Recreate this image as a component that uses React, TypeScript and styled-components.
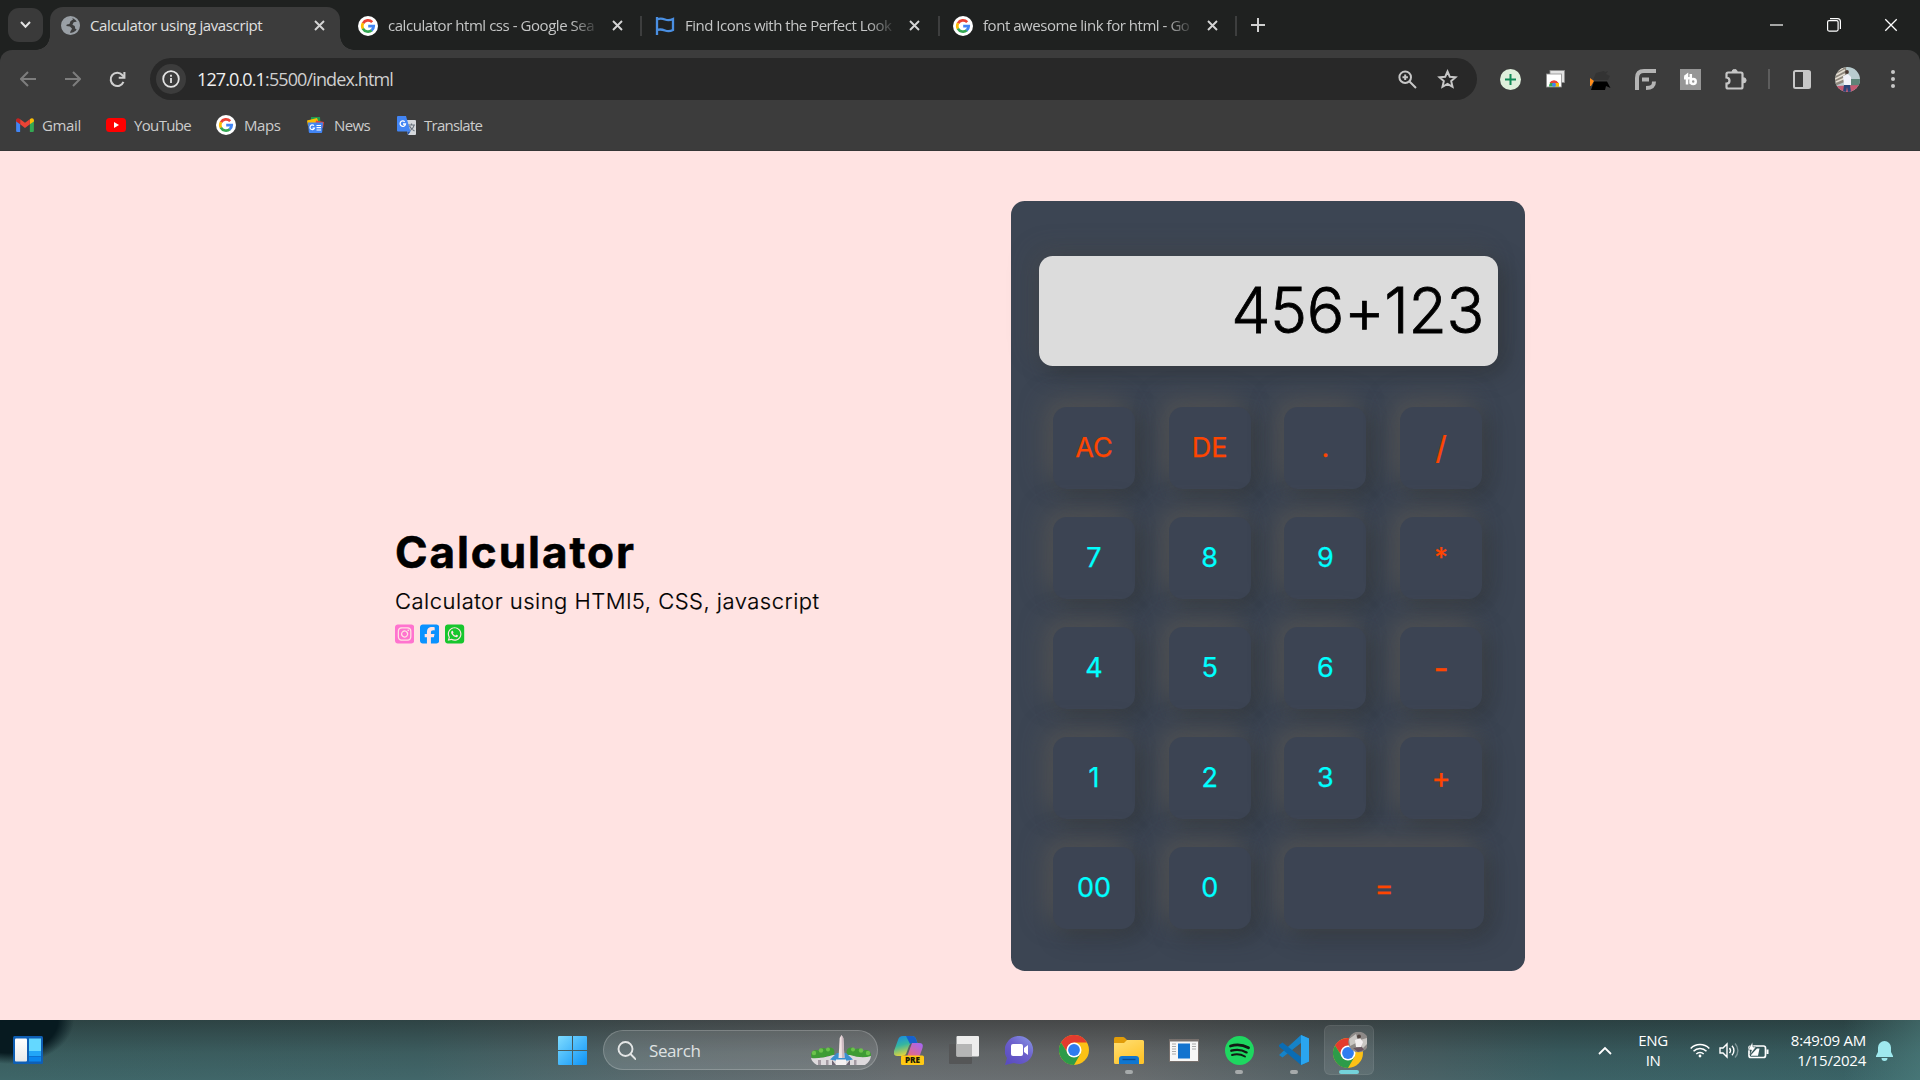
import React from 'react';
import styled, { createGlobalStyle } from 'styled-components';
import { FaSquareInstagram, FaSquareFacebook, FaSquareWhatsapp } from 'react-icons/fa6';

const Global = createGlobalStyle`
  * { box-sizing: border-box; }
  html, body { margin: 0; padding: 0; overflow: hidden; }
  svg { display: block; flex: none; }
`;

const ui = `'Segoe UI', 'Open Sans', 'Noto Sans', sans-serif`;
const page = `Inter, 'Open Sans', sans-serif`;

const Screen = styled.div`
  width: 1920px;
  height: 1080px;
  display: flex;
  flex-direction: column;
  font-family: ${ui};
  overflow: hidden;
`;

/* ---------- tab strip ---------- */
const TabStrip = styled.div`
  height: 50px;
  flex: none;
  display: flex;
  align-items: center;
  background: #1f2120;
  padding-left: 8px;
`;
const TabSearch = styled.div`
  width: 35px;
  height: 34px;
  border-radius: 11px;
  background: #3a3a3a;
  display: grid;
  place-items: center;
  margin-right: 7px;
`;
const ActiveTab = styled.div`
  position: relative;
  width: 290px;
  height: 43px;
  align-self: flex-end;
  background: #3c3c3c;
  border-radius: 13px 13px 0 0;
  display: flex;
  align-items: center;
  padding: 0 12px 6px 11px;
  &::before, &::after {
    content: '';
    position: absolute;
    bottom: 0;
    width: 14px;
    height: 14px;
  }
  &::before { left: -14px; background: radial-gradient(circle at 0 0, transparent 13.5px, #3c3c3c 14px); }
  &::after { right: -14px; background: radial-gradient(circle at 100% 0, transparent 13.5px, #3c3c3c 14px); }
`;
const Tab = styled.div<{ $w: number; $pad: number }>`
  width: ${p => p.$w}px;
  height: 20px;
  margin-top: 1px;
  border-right: 2px solid #3d3e3e;
  display: flex;
  align-items: center;
  padding-left: ${p => p.$pad}px;
`;
const TabTitle = styled.div<{ $fade?: boolean; $ls: number }>`
  width: 209px;
  margin: -1px 0 0 10px;
  font-size: 15px;
  line-height: 22px;
  letter-spacing: ${p => p.$ls}px;
  color: ${p => (p.$fade ? '#c5c6c6' : '#e0e0e0')};
  white-space: nowrap;
  ${p => p.$fade && `
    -webkit-mask-image: linear-gradient(90deg, #000 183px, transparent 212px);
    mask-image: linear-gradient(90deg, #000 183px, transparent 212px);
  `}
`;
const TabClose = styled.div<{ $ml: number }>`
  margin-left: ${p => p.$ml}px;
`;
const NewTab = styled.div`
  margin-left: 14px;
`;
const WindowButtons = styled.div`
  margin-left: auto;
  margin-right: 1px;
  height: 100%;
  display: grid;
  grid-template-columns: repeat(3, 57px);
  place-items: center;
`;

/* ---------- toolbar ---------- */
const ToolbarBack = styled.div`
  background: #1f2120;
  flex: none;
`;
const Toolbar = styled.div`
  height: 58px;
  background: #3c3c3c;
  border-radius: 12px 12px 0 0;
  display: flex;
  align-items: center;
  padding-left: 5px;
`;
const Slot = styled.div<{ $w?: number }>`
  width: ${p => p.$w ?? 45}px;
  height: 42px;
  display: grid;
  place-items: center;
`;
const Omnibox = styled.div`
  width: 1327px;
  height: 42px;
  margin: 0 11px 0 10px;
  border-radius: 21px;
  background: #282828;
  display: flex;
  align-items: center;
  padding: 0 10px 0 6px;
`;
const InfoBadge = styled.div`
  width: 30px;
  height: 30px;
  border-radius: 50%;
  background: #3c3c3c;
  display: grid;
  place-items: center;
`;
const Url = styled.div`
  flex: 1;
  margin-left: 11px;
  font-size: 18px;
  line-height: 24px;
  letter-spacing: -0.88px;
  color: #cfcfcf;
  span { color: #f0f0f0; }
`;
const OmniIcon = styled.div`
  width: 40px;
  display: grid;
  place-items: center;
`;
const Avatar = styled.div`
  border-radius: 50%;
  overflow: hidden;
`;

/* ---------- bookmarks ---------- */
const Bookmarks = styled.div`
  height: 43px;
  flex: none;
  background: #3c3c3c;
  border-bottom: 1px solid #353535;
  display: grid;
  grid-template-columns: 90px 110px 90px 91px 120px;
  padding-left: 16px;
`;
const Bookmark = styled.div<{ $gap: number; $ls: number }>`
  display: flex;
  align-items: center;
  height: 35px;
  gap: ${p => p.$gap}px;
  font-size: 15px;
  line-height: 20px;
  padding-bottom: 1px;
  color: #cccccc;
  letter-spacing: ${p => p.$ls}px;
`;

/* ---------- page ---------- */
const Page = styled.main`
  height: 869px;
  flex: none;
  background: #ffe3e2;
  display: flex;
  align-items: flex-start;
  padding: 50px 0 0 395px;
  font-family: ${page};
`;
const Intro = styled.section`
  width: 616px;
  padding-top: 321px;
`;
const Title = styled.h1`
  margin: 0;
  font-size: 44px;
  line-height: 60px;
  font-weight: 700;
  color: #000;
  letter-spacing: 1.95px;
  -webkit-text-stroke: 0.6px #000;
`;
const Subtitle = styled.p`
  margin: 2px 0 0;
  font-size: 22px;
  line-height: 34px;
  font-weight: 300;
  color: #000;
  letter-spacing: 0.5px;
  -webkit-text-stroke: 0.2px #000;
  white-space: nowrap;
`;
const Social = styled.div`
  display: flex;
  gap: 6px;
  margin-top: 5px;
  svg { width: 19.2px; height: 22px; }
`;
const Calculator = styled.section`
  width: 514px;
  height: 770px;
  border-radius: 13.75px;
  background: #3c4553;
  padding: 55px 27px 0 28px;
`;
const Display = styled.div`
  height: 110px;
  border-radius: 13.75px;
  background: #dcdcdc;
  padding: 0 14px 2px 0;
  display: flex;
  align-items: center;
  justify-content: flex-end;
  font-size: 62.5px;
  font-weight: 300;
  letter-spacing: -0.4px;
  color: #000;
  -webkit-text-stroke: 0.8px #000;
  box-shadow: -7px -7px 24px rgba(84, 78, 74, 0.3), 7px 7px 21px rgba(42, 46, 50, 0.55);
`;
const Keys = styled.div`
  display: grid;
  grid-template-columns: repeat(4, 82px);
  grid-auto-rows: 82px;
  column-gap: 33.7px;
  row-gap: 28px;
  margin: 41px 0 0 14px;
`;
const Key = styled.button<{ $op?: boolean; $wide?: boolean; $size?: number }>`
  grid-column: span ${p => (p.$wide ? 2 : 1)};
  width: ${p => (p.$wide ? '199.5px' : '82px')};
  border: 0;
  padding: 0;
  border-radius: 13.75px;
  background: #3c4453;
  color: ${p => (p.$op ? '#ff4500' : '#00ffff')};
  font: 400 ${p => p.$size ?? 27}px/82px ${page};
  -webkit-text-stroke: 0.25px currentColor;
  box-shadow: -8px -8px 24px rgba(94, 90, 86, 0.62), 7px 7px 22px rgba(42, 46, 50, 0.55);
`;

/* ---------- taskbar ---------- */
const Taskbar = styled.footer`
  height: 60px;
  flex: none;
  display: flex;
  align-items: center;
  background:
    radial-gradient(ellipse 64px 44px at 10px 0, #071a20 75%, rgba(7, 26, 32, 0) 100%),
    linear-gradient(90deg, rgba(0,0,0,0) 96%, rgba(86,140,138,.45) 100%),
    linear-gradient(180deg, rgba(20, 18, 16, 0.42), rgba(20, 18, 16, 0.12) 55%, rgba(0, 0, 0, 0)),
    linear-gradient(90deg, #3e6668 0, #42676a 420px, #5d6c70 680px, #6a7073 900px, #6a6e70 1120px, #566468 1320px, #3c6266 1560px, #3a6467 1920px);
`;
const Widgets = styled.div`
  width: 547px;
  flex: none;
  padding-left: 13px;
`;
const TaskItem = styled.div<{ $active?: boolean }>`
  position: relative;
  width: 50px;
  height: 50px;
  margin-right: 5px;
  border-radius: 6px;
  display: grid;
  place-items: center;
  flex: none;
  background: ${p => (p.$active ? 'rgba(255,255,255,.09)' : 'transparent')};
  box-shadow: ${p => (p.$active ? 'inset 0 0 0 1px rgba(255,255,255,.07)' : 'none')};
`;
const Running = styled.i<{ $active?: boolean }>`
  position: absolute;
  left: 50%;
  bottom: 1px;
  width: ${p => (p.$active ? 20 : 8)}px;
  height: 4px;
  border-radius: 2px;
  transform: translateX(-50%);
  background: ${p => (p.$active ? '#74d3da' : '#a6aaab')};
`;
const SearchBox = styled.div`
  width: 275px;
  height: 40px;
  flex: none;
  margin-left: 1px;
  margin-right: 6px;
  border-radius: 20px;
  border: 1px solid rgba(255, 255, 255, 0.2);
  background: rgba(255, 255, 255, 0.12);
  display: flex;
  align-items: center;
  padding: 0 5px 0 13px;
  overflow: hidden;
  color: #dfe2e2;
  font-size: 17px;
  letter-spacing: -0.4px;
  span { flex: 1; margin: 0 0 0 13px; }
`;
const Tray = styled.div`
  margin-left: auto;
  display: flex;
  align-items: center;
  height: 60px;
  color: #fff;
  font-size: 15px;
  line-height: 20px;
`;
const Lang = styled.div`
  width: 50px;
  margin: 0 12px 0 16px;
  text-align: center;
  letter-spacing: -0.4px;
`;
const TrayIcons = styled.div`
  display: flex;
  align-items: center;
  gap: 9px;
  width: 81px;
`;
const Clock = styled.div`
  width: 95px;
  text-align: right;
  letter-spacing: -0.25px;
  white-space: nowrap;
`;
const Bell = styled.div`
  margin: 2px 27px 0 10px;
`;

/* ---------- drawings ---------- */
const CloseX = ({ size = 11, color = '#d5d5d5', w = 1.9 }: { size?: number; color?: string; w?: number }) => (
  <svg width={size} height={size} viewBox="0 0 11 11"><path d="M1 1l9 9M10 1l-9 9" stroke={color} strokeWidth={w} fill="none" /></svg>
);
const GoogleG = ({ size = 20 }: { size?: number }) => (
  <svg width={size} height={size} viewBox="0 0 20 20">
    <circle cx="10" cy="10" r="10" fill="#fff" />
    <g fill="none" strokeWidth="2.7">
      <path d="M14.2 6.2A5.7 5.7 0 0 0 5 7.3" stroke="#ea4335" />
      <path d="M5 7.2a5.8 5.8 0 0 0 0 5.6" stroke="#fbbc05" />
      <path d="M4.9 12.6a5.8 5.8 0 0 0 8.900 1.600" stroke="#34a853" />
      <path d="M13.600 14.400A5.700 5.700 0 0 0 15.700 10.100H10.200" stroke="#4285f4" />
    </g>
  </svg>
);
const Globe = () => (
  <svg width="19" height="19" viewBox="0 0 18 18">
    <circle cx="9" cy="9" r="8" fill="#3c3c3c" stroke="#9aa0a6" strokeWidth="2" />
    <path d="M2 6.500C3 3 6 1.500 10 1.500L11.500 3 9 5 8 7.500 5.500 8 5 9.500 8.500 10l2 2L9 14.500 8.500 17A8 8 0 0 1 1 9z" fill="#9aa0a6" />
    <path d="M12 6l4.500-1A8 8 0 0 1 16 13l-2.500-1-.5-2.500-2.200-1.300z" fill="#9aa0a6" />
  </svg>
);
const FlagIcon = () => (
  <svg width="20" height="20" viewBox="0 0 20 20" fill="none" stroke="#4a8fe2" strokeWidth="2.300">
    <path d="M2 1v18M2 3.500c3-1.500 5.500-1 8 0s5 1 8-.5v11c-3 1.500-5.500 1.500-8 .5s-5-1.500-8-.5" />
  </svg>
);
const Arrow = ({ flip }: { flip?: boolean }) => (
  <svg width="16" height="16" viewBox="0 0 16 16" fill="none" stroke="#7d7d7d" strokeWidth="2">
    {flip ? <path d="M0 8h14.500M8 1l7 7-7 7" /> : <path d="M16 8H1.500M8 1L1 8l7 7" />}
  </svg>
);
const Reload = () => (
  <svg width="17" height="17" viewBox="0 0 18 18" fill="none" stroke="#cfcfcf" strokeWidth="2.200">
    <path d="M15.300 11.500A7 7 0 1 1 14 4.200L16 6.300" /><path d="M16.300 1v6.200h-6" />
  </svg>
);
const Info = () => (
  <svg width="18" height="18" viewBox="0 0 18 18"><circle cx="9" cy="9" r="7.800" fill="none" stroke="#e3e3e3" strokeWidth="1.800" /><path d="M9 8v5M9 4.700v2" stroke="#e3e3e3" strokeWidth="1.800" /></svg>
);
const ZoomIcon = () => (
  <svg width="19" height="19" viewBox="0 0 19 19" fill="none" stroke="#c7c7c7" strokeWidth="2"><circle cx="7.200" cy="7.200" r="5.800" /><path d="M11.500 11.500l6.500 6.500M7.200 4.500v5.400M4.500 7.200h5.400" /></svg>
);
const Star = () => (
  <svg width="21" height="20" viewBox="0 0 21 20" fill="none" stroke="#c7c7c7" strokeWidth="2"><path d="M10.500 2.500l2.300 5.300 5.700.5-4.300 3.800 1.300 5.700-5-3-5 3 1.300-5.700L2.500 8.300l5.700-.5z" /></svg>
);
const PlusBadge = () => (
  <svg width="21" height="21" viewBox="0 0 21 21"><circle cx="10.500" cy="10.500" r="10.500" fill="#dff0dc" /><path d="M10.500 5v11M5 10.500h11" stroke="#118a56" strokeWidth="2" /></svg>
);
const CardsIcon = () => (
  <svg width="19" height="18" viewBox="0 0 19 18">
    <rect x="4" y=".5" width="14.500" height="12" fill="#e2e2e2" stroke="#8d8d8d" strokeWidth=".8" />
    <rect x=".5" y="4" width="15" height="13" fill="#fff" stroke="#8d8d8d" strokeWidth=".8" />
    <path d="M3 16.500a5 5.500 0 0 1 10 0z" fill="#34a853" /><path d="M3.500 13a5 5 0 0 1 9 0H8z" fill="#ea4335" /><path d="M9 13h4v3.500H9z" fill="#fbbc05" /><circle cx="8" cy="14.700" r="2" fill="#4285f4" />
  </svg>
);
const DarkIcon = () => (
  <svg width="21" height="21" viewBox="0 0 21 21"><path d="M6 4l8-2 1 1 3-1-2 3 4 2-2 4H3z" fill="#333" /><path d="M0 9l4 3-3 5H0z" fill="#ff8c1a" /><path d="M4 12.500h13L20.500 19 16 17l-1 4H1z" fill="#000" /></svg>
);
const FIcon = () => (
  <svg width="21" height="21" viewBox="0 0 21 21" fill="none" stroke="#b4b4b4" strokeWidth="4"><path d="M2 21V9q0-7 7-7h12M7 10.500h7" /><path d="M19 12.500c0 5-2 6.500-8 6.500" /></svg>
);
const TbIcon = () => (
  <svg width="21" height="21" viewBox="0 0 21 21"><rect width="21" height="21" fill="#969696" /><g fill="none" stroke="#fff" strokeWidth="2.500"><path d="M4.500 8L7 6v9.500M4 9.300h6.500M10.800 5v10" /><circle cx="13.200" cy="12.500" r="2.500" /></g></svg>
);
const Puzzle = () => (
  <svg width="22" height="21" viewBox="0 0 22 21"><path d="M3 3.500h13a1.500 1.500 0 0 1 1.500 1.500v13a1.500 1.500 0 0 1-1.500 1.500H3A1.500 1.500 0 0 1 1.500 18v-3.500c4 0 4-5.500 0-6V5A1.500 1.500 0 0 1 3 3.500z" fill="none" stroke="#c7c7c7" strokeWidth="2.200" /><path d="M7 3a2.600 2.600 0 0 1 5.200 0zM18.500 8.700a2.600 2.600 0 0 1 0 5.200z" fill="#c7c7c7" stroke="#c7c7c7" /></svg>
);
const SidePanel = () => (
  <svg width="18" height="19" viewBox="0 0 18 19"><rect x="1" y="1" width="16" height="17" rx="1.500" fill="none" stroke="#c7c7c7" strokeWidth="2" /><path d="M10 1h7v17h-7z" fill="#c7c7c7" /></svg>
);
const Photo = ({ size }: { size: number }) => (
  <svg width={size} height={size} viewBox="0 0 25 25">
    <rect width="25" height="25" fill="#b9cccf" /><path d="M0 0h11l1 14-12 5z" fill="#8d867c" /><path d="M1 8l9-5M0 12l10-5M1 15l9-4M2 4l6-3" stroke="#e4ddd2" strokeWidth="1.500" /><path d="M14 12h11v8H14z" fill="#5e8478" />
    <path d="M0 19l25-1v7H0z" fill="#c45a72" /><path d="M8 9l5-2 3 3v8H9z" fill="#f2f2fa" /><circle cx="12" cy="5" r="1.900" fill="#4a3731" /><path d="M9 18h6l1 7h-3l-1-5-1 5H8z" fill="#2b4478" />
  </svg>
);
const Dots = () => (<svg width="4" height="20" viewBox="0 0 4 20" fill="#c7c7c7"><circle cx="2" cy="3" r="2" /><circle cx="2" cy="10" r="2" /><circle cx="2" cy="17" r="2" /></svg>);
const Gmail = () => (
  <svg width="18" height="14" viewBox="0 0 19 15"><path d="M0 2h4.300v13H1.200Q0 15 0 13.800z" fill="#4285f4" /><path d="M14.700 2H19v11.800q0 1.200-1.200 1.200h-3.100z" fill="#34a853" /><path d="M14.700 6.700V1.300C16.500-.5 19 0 19 2.500v1.200z" fill="#fbbc04" /><path d="M4.300 6.700V1.300L9.500 5.200l5.200-3.900v5.400L9.500 10.600z" fill="#ea4335" /><path d="M0 3.700V2.500C0 0 2.500-.5 4.300 1.300v5.400z" fill="#c5221f" /></svg>
);
const YouTube = () => (<svg width="20" height="14" viewBox="0 0 20 14"><rect width="20" height="14" rx="3.500" fill="#f00" /><path d="M8 4l5 3-5 3z" fill="#fff" /></svg>);
const News = () => (
  <svg width="19" height="16" viewBox="0 0 19 16"><path d="M5 0l9-.2.500 7H5z" fill="#1e9b50" /><path d="M1 3.500l10-2.500 2 5-11 3z" fill="#fbbc04" /><path d="M10 3.500l8 1.500-1 6-8-2z" fill="#ea4335" /><path d="M2 5.500h15l-.8 9.500q-.1 1-1 1H3.800q-.900 0-1-1z" fill="#4285f4" /><g fill="none" stroke="#fff" strokeWidth="1.200"><path d="M8 8.700a2.300 2.300 0 1 0 .5 2.300H6.500M10.500 8.500h4.500M10.500 10.700h4.500M10.500 13h4.500" /></g></svg>
);
const Translate = () => (
  <svg width="19" height="19" viewBox="0 0 19 19"><path d="M7 4h11a1 1 0 0 1 1 1v13a1 1 0 0 1-1 1h-7z" fill="#d5d8dc" /><path d="M11 9h7M14.500 7.500V9M17 9c-.5 3-3 5-5 6M12.500 10c1 2 3 4 5 5" stroke="#6b747e" strokeWidth="1.200" fill="none" /><path d="M1 0h8l4.500 15.500H1a1 1 0 0 1-1-1V1a1 1 0 0 1 1-1z" fill="#4285f4" /><path d="M7.700 5.700a2.700 2.700 0 1 0 .8 2.300H6" stroke="#fff" strokeWidth="1.300" fill="none" /><path d="M10 15.500h3.500L11 19z" fill="#2454ad" /></svg>
);
const ChromeDisc = () => (
  <>
    <circle cx="15" cy="15" r="15" fill="#fbc116" />
    <path d="M2 7.500A15 15 0 0 1 28 7.500H15L9 18.500z" fill="#e33b2e" />
    <path d="M2 7.500A15 15 0 0 0 15 30l6.500-11.200L9 18.500z" fill="#2d9b49" />
    <circle cx="15" cy="15" r="7.500" fill="#fff" /><circle cx="15" cy="15" r="5.900" fill="#2f7cf0" />
  </>
);
const Chrome = () => (<svg width="30" height="30" viewBox="0 0 30 30"><ChromeDisc /></svg>);
const WidgetIcon = () => (
  <svg width="30" height="28" viewBox="0 0 30 28"><defs><linearGradient id="wp" x2="0" y2="1"><stop stopColor="#fff" /><stop offset="1" stopColor="#e9e9e9" /></linearGradient></defs><rect width="30" height="28" rx="1.500" fill="#0f5fb4" /><rect x="2" y="2.500" width="12" height="23" rx="1" fill="url(#wp)" /><path d="M16 2.500h12V15H16z" fill="#64d8ff" /><path d="M16 15h12v5H16z" fill="#22a6f7" /><path d="M16 20.500h12v5H16z" fill="#0b86ec" /></svg>
);
const WinLogo = () => (
  <svg width="29" height="29" viewBox="0 0 29 29"><defs><linearGradient id="wl" gradientUnits="userSpaceOnUse" x1="0" y1="0" x2="29" y2="29"><stop stopColor="#7fdcff" /><stop offset="1" stopColor="#0d93f7" /></linearGradient></defs><path d="M0 1q0-1 1-1h13v14H0zM15 0h13q1 0 1 1v13H15zM0 15h14v14H1q-1 0-1-1zM15 15h14v13q0 1-1 1H15z" fill="url(#wl)" /></svg>
);
const SearchGlyph = () => (<svg width="19" height="19" viewBox="0 0 19 19" fill="none" stroke="#e4e6e6" strokeWidth="1.900"><circle cx="8.500" cy="8" r="7" /><path d="M13.500 13l5 5" strokeLinecap="round" /></svg>);
const Monument = () => (
  <svg width="62" height="30" viewBox="0 0 62 30">
    <g fill="#3f9c35"><circle cx="6" cy="20" r="5" /><circle cx="13" cy="18" r="5" /><circle cx="20" cy="17" r="4.500" /><circle cx="41" cy="17" r="4.500" /><circle cx="48" cy="18" r="4.500" /><circle cx="56" cy="20" r="5" /></g>
    <g fill="#6bc24b"><circle cx="4" cy="18" r="2.200" /><circle cx="11" cy="15.500" r="2.200" /><circle cx="18" cy="14.500" r="2" /><circle cx="43" cy="14.500" r="2" /><circle cx="51" cy="15.500" r="2.200" /><circle cx="58" cy="18" r="2.200" /></g>
    <path d="M1 23q9 1 22-3h17q12 4 21 1-1 7-8 10H9q-7-3-8-8z" fill="#dedadd" />
    <path d="M20 24.500l7-6.500h9l7 6.500-5 1H25z" fill="#3a8fd0" /><path d="M8 25h3v5H8zM16 25h2.500v5H16zM44 25h2.500v5H44z" fill="#a39aa2" />
    <path d="M26 24.500h10V30H26z" fill="#f6f2f2" /><path d="M22 25l4 5h-4zM40 25l-4 5h4z" fill="#6f6774" />
    <path d="M29.700 3L31.500 0l1.800 3L34.500 23h-6z" fill="#f3e3e4" /><path d="M31.500 0l1.800 3L34.500 23H32z" fill="#cdb9c1" />
  </svg>
);
const Copilot = () => (
  <svg width="30" height="29" viewBox="0 0 30 29">
    <defs><linearGradient id="c1" x2=".3" y2="1"><stop stopColor="#1589e8" /><stop offset=".5" stopColor="#35b6a0" /><stop offset="1" stopColor="#e3d43c" /></linearGradient><linearGradient id="c2" x1=".8" x2="0" y2="1"><stop stopColor="#a866f0" /><stop offset="1" stopColor="#f06a70" /></linearGradient></defs>
    <path d="M18 7h7q5 0 3.500 5L26 19q-1 2-4 2h-9z" fill="url(#c2)" /><path d="M9 0h9q3 0 4 3l1.500 4H18q-2 0-3 3l-3 8q-1 2-4 2H3q-4 0-3-5L4 4q1-4 5-4z" fill="url(#c1)" /><path d="M12 0h6q3 0 4 3l1.500 4H18l-2 1z" fill="#1760cd" />
    <rect x="7" y="19.500" width="23" height="9.500" rx="1.500" fill="#ffc814" /><text x="18.500" y="27.300" textAnchor="middle" fontFamily="Open Sans, sans-serif" fontSize="8.200" fontWeight="800" fill="#201a05">PRE</text>
  </svg>
);
const TaskView = () => (
  <svg width="30" height="28" viewBox="0 0 30 28"><rect x="0" y="8" width="23" height="20" rx="1" fill="#555657" /><rect x="7.500" width="22.500" height="20.500" rx="1" fill="#ededed" /><path d="M7.500 8H23v12.500H7.500z" fill="#b5b6b6" /></svg>
);
const Chat = () => (
  <svg width="29" height="29" viewBox="0 0 29 29"><defs><linearGradient id="ch" x1="1" x2=".2" y2="1"><stop stopColor="#8a9be8" /><stop offset=".5" stopColor="#6c60cc" /><stop offset="1" stopColor="#5a4cc0" /></linearGradient></defs><path d="M15 0a14 14 0 1 1-6 27L0 29l2-7A14.300 14.300 0 0 1 15 0z" fill="url(#ch)" /><rect x="6" y="8" width="12" height="12" rx="2" fill="#fff" /><path d="M19 12l4-3v10l-4-3z" fill="#fff" /></svg>
);
const Folder = () => (
  <svg width="30" height="27" viewBox="0 0 30 27"><defs><linearGradient id="fo" x2=".6" y2="1"><stop stopColor="#ffdf75" /><stop offset="1" stopColor="#ffc42b" /></linearGradient></defs><path d="M0 1.500Q0 0 1.500 0H9q1 0 2 1l2 2v5H0z" fill="#e19c08" /><path d="M0 6h10l3-3h15.500Q30 3 30 4.500v21q0 1.500-1.500 1.500h-27Q0 27 0 25.500z" fill="url(#fo)" /><path d="M5 27v-5q0-3 3-3h14q3 0 3 3v5z" fill="#1076cf" /><path d="M8.500 22.500h13" stroke="#0a4c91" strokeWidth="1.300" /></svg>
);
const AppWindow = () => (
  <svg width="30" height="23" viewBox="0 0 30 23"><rect width="30" height="23" fill="#77706d" /><rect x="1" y="2.500" width="28" height="19.500" fill="#f7f7f7" /><rect x="9" y="4.500" width="12" height="15" fill="#1273cf" /><path d="M3 5h4M3 7.500h4M3 10h4M3 12.500h4M3 15h4M23 5h4M23 7.500h4M23 10h4" stroke="#aaa" /></svg>
);
const Spotify = () => (
  <svg width="29" height="29" viewBox="0 0 29 29"><circle cx="14.500" cy="14.500" r="14.500" fill="#1ed760" /><g fill="none" stroke="#121a14" strokeLinecap="round"><path d="M5.500 10c6-1.800 12.500-1.200 18 1.800" strokeWidth="2.800" /><path d="M6.300 14.700c5-1.500 10.600-1 15.300 1.700" strokeWidth="2.300" /><path d="M7 19c4.300-1.200 9-.8 13 1.500" strokeWidth="1.900" /></g></svg>
);
const VSCode = () => (
  <svg width="30" height="30" viewBox="0 0 30 30"><path d="M22 0L30 3.500v23L22 30V8L3.500 22.500 0 20z" fill="#1583c9" /><path d="M0 10l3.500-2.500L22 22v8L0 11.500z" fill="#0a6cb4" /><path d="M22 0l8 3.500v23L22 30z" fill="#2aa5f0" /></svg>
);
const ChromeProfile = () => (
  <svg width="36" height="36" viewBox="0 0 36 36">
    <g transform="translate(2 6)"><ChromeDisc /></g>
    <circle cx="27.500" cy="10" r="10.300" fill="#8e8a88" /><path d="M18 7l7-5 2 8-8 4zM29 8l7-2v6l-5 5z" fill="#c9c6c3" /><path d="M24 8l5-2 3 4-2 5h-5z" fill="#f2eef0" /><circle cx="28" cy="4.500" r="2" fill="#50433f" /><path d="M22 16l9-1 2 3-6 2z" fill="#6a5560" />
  </svg>
);
const Wifi = () => (<svg width="20" height="15" viewBox="0 0 20 15" fill="none" stroke="#fff" strokeWidth="1.500"><path d="M.7 5.500a13 13 0 0 1 18.600 0M3.500 8.300a9 9 0 0 1 13 0M6.300 11a5.200 5.200 0 0 1 7.400 0" /><circle cx="10" cy="13" r="1.400" fill="#fff" stroke="none" /></svg>);
const Speaker = () => (<svg width="20" height="17" viewBox="0 0 20 17" fill="none" stroke="#fff" strokeWidth="1.400"><path d="M1 6h3l4-4v13l-4-4H1zM10.500 6a4 4 0 0 1 0 5M13 3.700a7 7 0 0 1 0 9.600" /><path d="M16 1.500a10 10 0 0 1 0 14" stroke="#7d9496" /></svg>);
const Battery = () => (<svg width="21" height="17" viewBox="0 0 21 17"><rect x="1" y="4" width="16.500" height="11.500" rx="2" fill="none" stroke="#fff" strokeWidth="1.700" /><path d="M18.500 7.500h2v4.500h-2zM3 13l6-6.500h2.500L10 13.800H3z" fill="#fff" /><path d="M4.500 0L0 8h3.500L2 13l6-8H5z" fill="#fff" stroke="#2f4a4c" strokeWidth=".5" /></svg>);

const keys: { label: string; op?: boolean; size?: number }[] = [
  { label: 'AC', op: true }, { label: 'DE', op: true }, { label: '.', op: true }, { label: '/', op: true, size: 32 },
  { label: '7' }, { label: '8' }, { label: '9' }, { label: '*', op: true },
  { label: '4' }, { label: '5' }, { label: '6' }, { label: '-', op: true, size: 33 },
  { label: '1' }, { label: '2' }, { label: '3' }, { label: '+', op: true, size: 29 },
  { label: '00' }, { label: '0' }, { label: '=', op: true, size: 29 },
];

export default function App() {
  return (
    <Screen>
      <Global />
      <TabStrip>
        <TabSearch><svg width="11" height="8" viewBox="0 0 11 8"><path d="M1 1l4.500 4.800L10 1" fill="none" stroke="#e3e3e3" strokeWidth="2" /></svg></TabSearch>
        <ActiveTab>
          <Globe />
          <TabTitle $ls={-0.38}>Calculator using javascript</TabTitle>
          <TabClose $ml={15}><CloseX /></TabClose>
        </ActiveTab>
        <Tab $w={302} $pad={18}>
          <GoogleG />
          <TabTitle $fade $ls={-0.45}>calculator html css - Google Sea</TabTitle>
          <TabClose $ml={15}><CloseX /></TabClose>
        </Tab>
        <Tab $w={298} $pad={13}>
          <FlagIcon />
          <TabTitle $fade $ls={-0.5}>Find Icons with the Perfect Look</TabTitle>
          <TabClose $ml={15}><CloseX /></TabClose>
        </Tab>
        <Tab $w={297} $pad={13}>
          <GoogleG />
          <TabTitle $fade $ls={-0.46}>font awesome link for html - Go</TabTitle>
          <TabClose $ml={15}><CloseX /></TabClose>
        </Tab>
        <NewTab><svg width="14" height="14" viewBox="0 0 14 14"><path d="M7 0v14M0 7h14" stroke="#d0d0d0" strokeWidth="2" /></svg></NewTab>
        <WindowButtons>
          <svg width="13" height="2" viewBox="0 0 13 2"><path d="M0 1h13" stroke="#fff" strokeWidth="1.200" /></svg>
          <svg width="14" height="14" viewBox="0 0 14 14" fill="none" stroke="#fff" strokeWidth="1.200"><rect x=".6" y="2.600" width="10.500" height="10.500" rx="1.500" /><path d="M3 .6h7.500q2.900 0 2.900 2.900V11" /></svg>
          <CloseX size={14} color="#fff" w={1} />
        </WindowButtons>
      </TabStrip>

      <ToolbarBack>
        <Toolbar>
          <Slot><Arrow /></Slot>
          <Slot><Arrow flip /></Slot>
          <Slot><Reload /></Slot>
          <Omnibox>
            <InfoBadge><Info /></InfoBadge>
            <Url><span>127.0.0.1</span>:5500/index.html</Url>
            <OmniIcon><ZoomIcon /></OmniIcon>
            <OmniIcon><Star /></OmniIcon>
          </Omnibox>
          <Slot><PlusBadge /></Slot>
          <Slot><CardsIcon /></Slot>
          <Slot><DarkIcon /></Slot>
          <Slot><FIcon /></Slot>
          <Slot><TbIcon /></Slot>
          <Slot><Puzzle /></Slot>
          <Slot $w={21}><svg width="2" height="20"><rect width="2" height="20" fill="#5d5d5d" /></svg></Slot>
          <Slot><SidePanel /></Slot>
          <Slot $w={47}><Avatar><Photo size={25} /></Avatar></Slot>
          <Slot $w={43}><Dots /></Slot>
        </Toolbar>
      </ToolbarBack>
      <Bookmarks>
        <Bookmark $gap={8} $ls={-0.35}><Gmail />Gmail</Bookmark>
        <Bookmark $gap={8} $ls={-0.65}><YouTube />YouTube</Bookmark>
        <Bookmark $gap={8} $ls={-0.45}><GoogleG />Maps</Bookmark>
        <Bookmark $gap={9} $ls={-0.6}><News />News</Bookmark>
        <Bookmark $gap={8} $ls={-0.75}><Translate />Translate</Bookmark>
      </Bookmarks>

      <Page>
        <Intro>
          <Title>Calculator</Title>
          <Subtitle>Calculator using HTMl5, CSS, javascript</Subtitle>
          <Social>
            <FaSquareInstagram color="#ff73cf" />
            <FaSquareFacebook color="#0a92ff" />
            <FaSquareWhatsapp color="#17c62d" />
          </Social>
        </Intro>
        <Calculator>
          <Display>456+123</Display>
          <Keys>
            {keys.map(({ label, op, size }) => (
              <Key key={label} $op={op} $size={size} $wide={label === '='}>{label}</Key>
            ))}
          </Keys>
        </Calculator>
      </Page>

      <Taskbar>
        <Widgets><WidgetIcon /></Widgets>
        <TaskItem><WinLogo /></TaskItem>
        <SearchBox><SearchGlyph /><span>Search</span><Monument /></SearchBox>
        <TaskItem><Copilot /></TaskItem>
        <TaskItem><TaskView /></TaskItem>
        <TaskItem><Chat /></TaskItem>
        <TaskItem><Chrome /></TaskItem>
        <TaskItem><Folder /><Running /></TaskItem>
        <TaskItem><AppWindow /></TaskItem>
        <TaskItem><Spotify /><Running /></TaskItem>
        <TaskItem><VSCode /><Running /></TaskItem>
        <TaskItem $active><ChromeProfile /><Running $active /></TaskItem>
        <Tray>
          <svg width="14" height="9" viewBox="0 0 14 9"><path d="M1 8l6-6 6 6" fill="none" stroke="#fff" strokeWidth="1.800" /></svg>
          <Lang>ENG<br />IN</Lang>
          <TrayIcons><Wifi /><Speaker /><Battery /></TrayIcons>
          <Clock>8:49:09 AM<br />1/15/2024</Clock>
          <Bell><svg width="17" height="20" viewBox="0 0 17 20"><path d="M8.500 0a6.500 6.500 0 0 1 6.500 6.500V11l2 4v1H0v-1l2-4V6.500A6.500 6.500 0 0 1 8.500 0zM5.500 17h6a3 3 0 0 1-6 0z" fill="#9fe9ee" /></svg></Bell>
        </Tray>
      </Taskbar>
    </Screen>
  );
}
